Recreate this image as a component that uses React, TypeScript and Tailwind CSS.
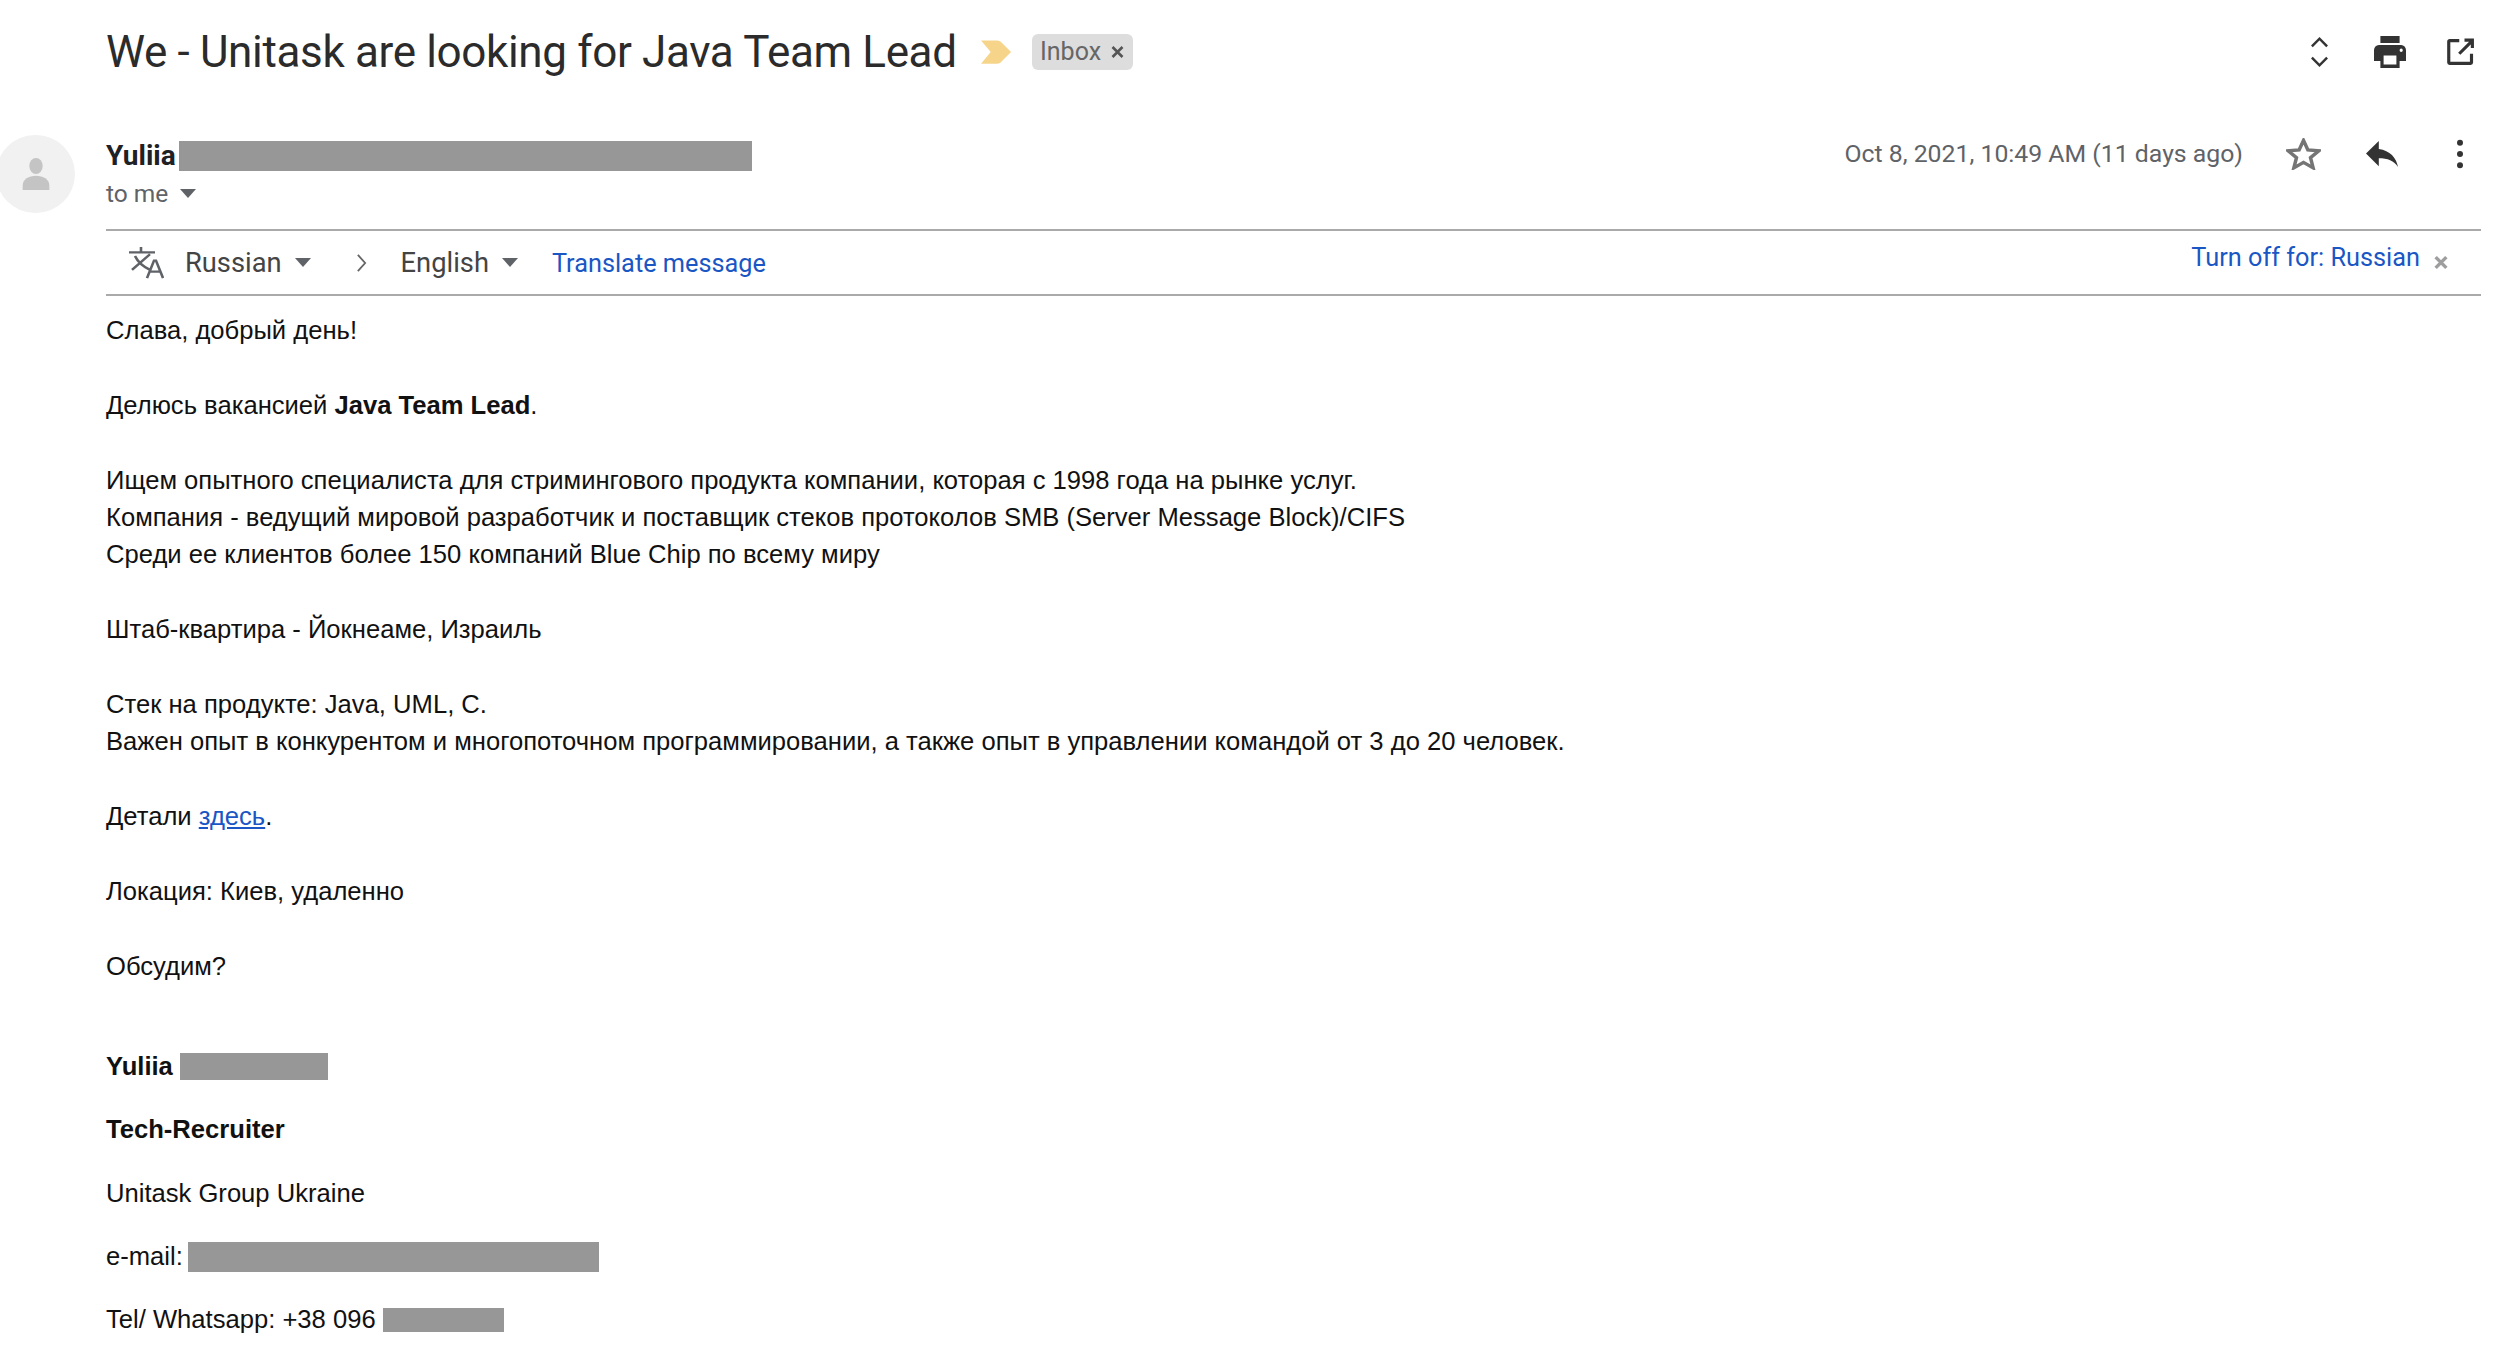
const Redact = ({ className }: { className: string }) => <span className={`inline-block bg-[#979797] ${className}`} />;

const Caret = ({ className = "" }: { className?: string }) => (
  <svg viewBox="0 0 16 10" className={`w-[16px] h-[10px] ${className}`}><path d="M0 0h16L8 9z" fill="#5f6368" /></svg>
);

export default function App() {
  return (
    <div className="w-[2500px] h-[1346px] overflow-hidden bg-white text-black font-['Liberation_Sans',sans-serif] relative">
      {/* Subject */}
      <div className="flex items-center h-[104px] pl-[106px] pr-[25px]">
        <h1 className="font-['Roboto',sans-serif] font-normal text-[44px] leading-[56px] tracking-[-0.35px] text-[#2b2b2b] whitespace-nowrap w-[875px]">We - Unitask are looking for Java Team Lead</h1>
        <svg viewBox="0 0 32 24" className="w-[31px] h-[24px] mr-[20px]"><path d="M0 0h17q3 0 5 3l9 9-9 9q-2 3-5 3H0l10-12z" fill="#f6d58b" /></svg>
        <div className="flex items-center h-[36px] pl-[8px] pr-[8px] rounded-[6px] bg-[#dddddd] font-['Roboto',sans-serif] text-[25px] text-[#666]">
          Inbox
          <svg viewBox="0 0 14 14" className="w-[15px] h-[14px] ml-[9px]"><path d="M2 2l10 10M12 2L2 12" stroke="#555" strokeWidth="2.6" /></svg>
        </div>
        <div className="ml-auto flex items-center">
          <svg viewBox="0 0 20 32" className="w-[19px] h-[32px]"><path d="M2 10L10 2l8 8M2 22l8 8 8-8" fill="none" stroke="#333" strokeWidth="2.6" /></svg>
          <svg viewBox="2 3 20 18" preserveAspectRatio="none" className="w-[32px] h-[32px] ml-[45px]"><path d="M19 8H5a3 3 0 0 0-3 3v6h4v4h12v-4h4v-6a3 3 0 0 0-3-3zm-3 11H8v-5h8zm3-7a1 1 0 1 1 0-2 1 1 0 0 1 0 2zM18 3H6v4h12z" fill="#333" /></svg>
          <svg viewBox="0 0 32 32" className="w-[28px] h-[28px] ml-[41px]"><path d="M14 3H3a1 1 0 0 0-1 1v24a1 1 0 0 0 1 1h24a1 1 0 0 0 1-1V18M20 2.500h9v9M29 3L14 18" fill="none" stroke="#333" strokeWidth="3.6" /></svg>
        </div>
      </div>

      {/* Sender */}
      <div className="flex h-[124px] pr-[35px]">
        <div className="w-[106px] shrink-0 relative overflow-hidden">
          <div className="absolute left-[-4px] top-[31px] w-[79px] h-[78px] rounded-full bg-[#f1f1f1] flex items-center justify-center">
            <svg viewBox="0 0 30 36" className="w-[30px] h-[32px]"><ellipse cx="15" cy="9" rx="7.5" ry="9" fill="#c4c4c4" /><path d="M0 36v-5c0-7 7-11 15-11s15 4 15 11v5z" fill="#c4c4c4" /></svg>
          </div>
        </div>
        <div className="pt-[37px]">
          <div className="flex items-center h-[30px]">
            <span className="font-['Roboto',sans-serif] font-bold text-[28px] text-[#202124]">Yuliia</span>
            <Redact className="w-[573px] h-[30px] ml-[3px]" />
          </div>
          <div className="flex items-center mt-[8px] font-['Roboto',sans-serif] text-[24.5px] leading-[30px] text-[#5f6368]">
            to me <Caret className="ml-[12px]" />
          </div>
        </div>
        <div className="ml-auto flex items-center self-start mt-[34px] h-[32px]">
          <span className="font-['Roboto',sans-serif] text-[24.8px] leading-[32px] text-[#5f6368] mr-[43px]">Oct 8, 2021, 10:49 AM (11 days ago)</span>
          <svg viewBox="2 2.500 20 19.500" preserveAspectRatio="none" className="w-[35px] h-[32px]"><path d="M12 4l2.500 5.800 6.300.5-4.800 4.200 1.500 6.200-5.500-3.300-5.500 3.300 1.500-6.200-4.800-4.200 6.300-.5z" fill="none" stroke="#757575" strokeWidth="2" /></svg>
          <svg viewBox="2 4 20 16.500" preserveAspectRatio="none" className="w-[32px] h-[26px] ml-[45px]"><path d="M10 9V4l-8 8 8 8v-5c5.500 0 9.500 1.600 12 5.500C21 14.500 17 10 10 9z" fill="#333" /></svg>
          <svg viewBox="0 0 8 32" className="w-[10px] h-[30px] ml-[57px]"><circle cx="4" cy="4" r="3.200" fill="#333" /><circle cx="4" cy="16" r="3.200" fill="#333" /><circle cx="4" cy="28" r="3.200" fill="#333" /></svg>
        </div>
      </div>

      {/* Translate bar */}
      <div className="ml-[106px] mt-[1px] w-[2375px] h-[67px] border-y-2 border-[#aaaaaa] flex items-center pl-[22px] pr-[32px] font-['Roboto',sans-serif] text-[27.3px]">
        <svg viewBox="0 1 36 36" preserveAspectRatio="none" className="w-[36px] h-[33px]" fill="none" stroke="#5f6368" strokeWidth="2.6"><path d="M1 8h26M13 2v6M4 27L22 10M7 12c3 7 9 12 15 15M19 36l7-19h2l7 19M22 29h10" /></svg>
        <span className="ml-[21px] mt-[2px] text-[#444]">Russian</span>
        <Caret className="ml-[13px]" />
        <svg viewBox="0 0 12 22" className="w-[13px] h-[20px] ml-[44px]"><path d="M2 2l8 9-8 9" fill="none" stroke="#666" strokeWidth="2" /></svg>
        <span className="ml-[33px] mt-[2px] text-[#444]">English</span>
        <Caret className="ml-[13px]" />
        <span className="ml-[34px] mt-[2px] text-[#1a56c4] text-[25.3px]">Translate message</span>
        <span className="ml-auto text-[#1a56c4] text-[25.3px] -mt-[10px]">Turn off for: Russian</span>
        <svg viewBox="0 0 14 14" className="w-[16px] h-[15px] ml-[13px]"><path d="M2 2l10 10M12 2L2 12" stroke="#9e9e9e" strokeWidth="3.200" /></svg>
      </div>

      {/* Body */}
      <div className="pl-[106px] pt-[16px] text-[25.6px] leading-[37.4px] text-[#111]">
        <p>Слава, добрый день!</p>
        <p className="mt-[37.4px]">Делюсь вакансией <b>Java Team Lead</b>.</p>
        <p className="mt-[37.4px]">Ищем опытного специалиста для стримингового продукта компании, которая с 1998 года на рынке услуг.</p>
        <p>Компания - ведущий мировой разработчик и поставщик стеков протоколов SMB (Server Message Block)/CIFS</p>
        <p>Среди ее клиентов более 150 компаний Blue Chip по всему миру</p>
        <p className="mt-[37.4px]">Штаб-квартира - Йокнеаме, Израиль</p>
        <p className="mt-[37.4px]">Стек на продукте: Java, UML, C.</p>
        <p>Важен опыт в конкурентом и многопоточном программировании, а также опыт в управлении командой от 3 до 20 человек.</p>
        <p className="mt-[37.4px]">Детали <a className="text-[#1a56c4] underline">здесь</a>.</p>
        <p className="mt-[37.4px]">Локация: Киев, удаленно</p>
        <p className="mt-[37.4px]">Обсудим?</p>
        <div className="mt-[62.5px] flex flex-col gap-[26px]">
          <p className="flex items-center"><b>Yuliia</b><Redact className="w-[148px] h-[27px] ml-[7px]" /></p>
          <p><b>Tech-Recruiter</b></p>
          <p>Unitask Group Ukraine</p>
          <p className="flex items-center">e-mail:<Redact className="w-[411px] h-[30px] ml-[5px]" /></p>
          <p className="flex items-center">Tel/ Whatsapp: +38 096<Redact className="w-[121px] h-[24px] ml-[7px]" /></p>
        </div>
      </div>
    </div>
  );
}
